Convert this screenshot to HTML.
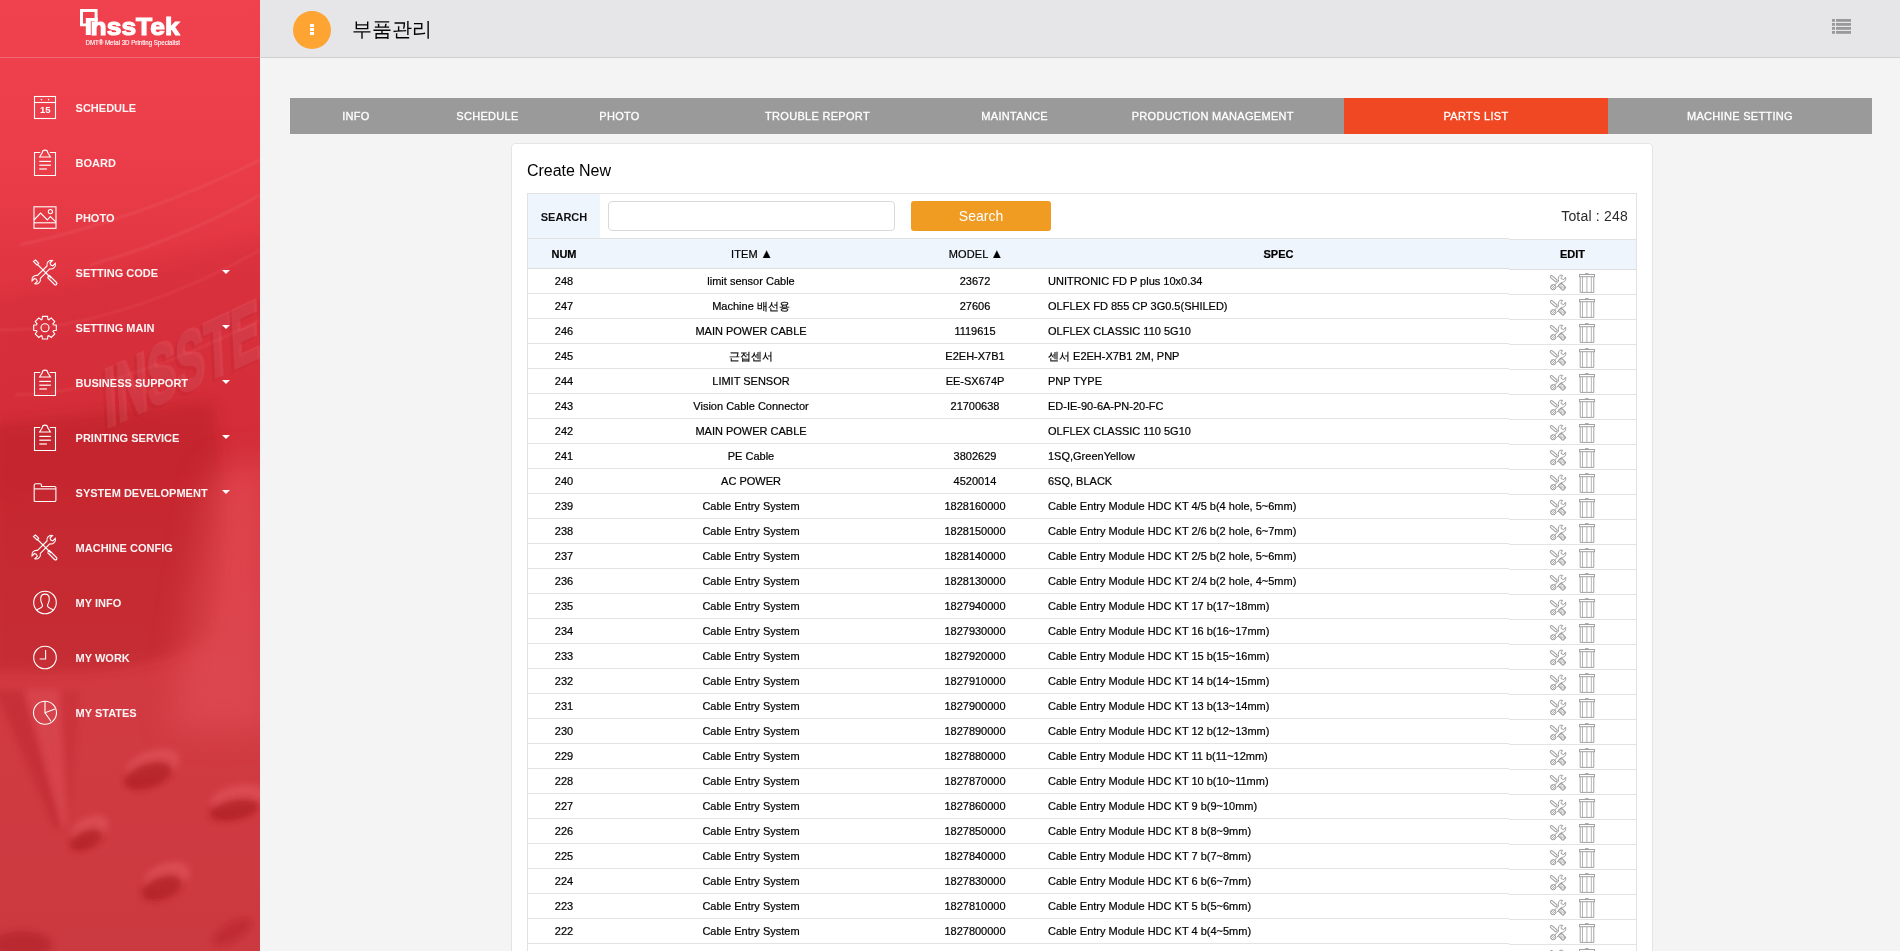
<!DOCTYPE html>
<html><head><meta charset="utf-8"><title>부품관리</title>
<style>
*{box-sizing:border-box;}
html,body{margin:0;-webkit-font-smoothing:antialiased;padding:0;width:1900px;height:951px;overflow:hidden;background:#f4f4f4;font-family:"Liberation Sans",sans-serif;}
#side{position:absolute;left:0;top:0;width:260px;height:951px;overflow:hidden;background:#e23c48;}
#side .bg{position:absolute;left:0;top:0;width:260px;height:951px;}
#logo{position:absolute;left:0;top:0;width:260px;height:58px;border-bottom:1px solid rgba(255,255,255,0.22);}
.menu{position:absolute;left:0;width:260px;height:55px;color:#fff;font-weight:bold;font-size:11px;}
.menu .ic{position:absolute;left:31px;top:13px;width:28px;height:28px;}
.menu .tx{position:absolute;left:75px;top:21px;line-height:13px;letter-spacing:0.1px;}
.menu .caret{position:absolute;left:221px;top:25px;width:0;height:0;border-left:4px solid transparent;border-right:4px solid transparent;border-top:4px solid #fff;}
#head{position:absolute;left:260px;top:0;width:1640px;height:58px;background:#e6e6e8;border-bottom:1px solid #cfcfd1;}
#circ{position:absolute;left:293px;top:11px;width:38px;height:38px;border-radius:50%;background:#fea433;}
#circ i{position:absolute;left:17px;width:4px;height:2.7px;background:#fff;}
#title{position:absolute;left:352px;top:15px;font-size:20px;color:#000;line-height:28px;}
#tabs{position:absolute;left:290px;top:98px;width:1582px;height:36px;background:#9a9a9a;}
#tabs div{position:absolute;top:0;height:36px;line-height:36px;text-align:center;color:#fff;font-size:11px;font-weight:normal;-webkit-text-stroke:0.3px #fff;letter-spacing:0.3px;}
#tabs div.on{background:#ef4822;}
#card{position:absolute;left:511px;top:143px;width:1142px;height:900px;background:#fff;border:1px solid #e4e4e4;border-radius:4px;}
#cn{position:absolute;left:527px;top:161px;font-size:16px;color:#000;letter-spacing:-0.05px;line-height:20px;}
#tbl{position:absolute;left:527px;top:193px;width:1110px;border-collapse:separate;border-spacing:0;border-left:1px solid #e2e2e2;border-right:1px solid #e2e2e2;font-size:11px;color:#000;}
#tbl td{-webkit-text-stroke:0.2px #000;padding:0;height:25px;border-bottom:1px solid #e3e3e3;text-align:center;white-space:nowrap;}
#tbl td.c4{text-align:left;padding-left:0;}
#tbl td.c5{position:relative;top:1px;}
#tbl tr.hd td{height:31px;background:#eef5fd;font-weight:bold;border-top:1px solid #e2e2e2;border-bottom-color:#dedede;}
#tbl tr.hd td.c2,#tbl tr.hd td.c3{font-weight:normal;letter-spacing:0.1px;}
.tri{font-size:12.8px;line-height:10px;margin-left:-0.6px;letter-spacing:0;}
.hs{position:relative;left:1px;}
#srow{position:absolute;left:527px;top:193px;width:1110px;height:45px;border:1px solid #e2e2e2;border-bottom:0;background:#fff;}
#srow .lab{position:absolute;left:0;top:0;width:72px;height:44px;overflow:hidden;background:#eef5fd;font-weight:bold;font-size:11px;line-height:46px;text-align:center;color:#111;}
#srow .inp{position:absolute;left:80px;top:7px;width:287px;height:30px;border:1px solid #d9d9d9;border-radius:4px;background:#fff;}
#srow .btn{position:absolute;left:383px;top:7px;width:140px;height:30px;border-radius:3px;background:#f09c22;color:#fff;font-size:14px;line-height:30px;text-align:center;}
#srow .tot{position:absolute;right:8px;top:0;line-height:44px;font-size:14px;color:#2a2a2a;letter-spacing:0.2px;}
.ed{position:absolute;left:36px;top:0;}
.tr{position:absolute;left:70px;top:0;}
#tbl td.c5 svg{display:block;}
#lst{position:absolute;left:1832px;top:19px;width:20px;height:16px;}
</style></head><body><div id="wrap" style="position:absolute;left:0;top:0;width:1900px;height:951px;will-change:transform;">
<div id="side">
<svg class="bg" width="260" height="951" viewBox="0 0 260 951">
<defs>
<linearGradient id="g1" x1="0" y1="0" x2="0" y2="1"><stop offset="0" stop-color="#f0424e"/><stop offset="0.15" stop-color="#ec3e4a"/><stop offset="0.3" stop-color="#df3540"/><stop offset="0.5" stop-color="#d6303a"/><stop offset="0.72" stop-color="#d23a42"/><stop offset="1" stop-color="#cb3a40"/></linearGradient>
<filter id="b20" x="-50%" y="-50%" width="200%" height="200%"><feGaussianBlur stdDeviation="16"/></filter>
<filter id="b8" x="-50%" y="-50%" width="200%" height="200%"><feGaussianBlur stdDeviation="7"/></filter>
<filter id="b3" x="-50%" y="-50%" width="200%" height="200%"><feGaussianBlur stdDeviation="3"/></filter>
<filter id="b1" x="-50%" y="-50%" width="200%" height="200%"><feGaussianBlur stdDeviation="1.2"/></filter>
</defs>
<rect width="260" height="951" fill="url(#g1)"/>
<path d="M-10 300 L270 235 L270 470 L-10 500 Z" fill="#c42430" opacity="0.22" filter="url(#b8)"/>
<path d="M-10 425 L212 400 C228 480 228 590 208 640 C150 672 60 676 -10 670 Z" fill="#b31a24" opacity="0.42" filter="url(#b8)"/>
<path d="M212 470 L270 455 L270 730 L170 730 Z" fill="#e6525b" opacity="0.5" filter="url(#b20)"/>
<g fill="none" stroke="#f57b82" stroke-width="2" filter="url(#b1)">
<path d="M20 245 C110 225 190 195 260 160" opacity="0.25"/>
<path d="M90 265 C160 245 215 220 260 195" opacity="0.25"/>
<path d="M0 330 C90 330 190 290 260 250" opacity="0.18"/>
<path d="M15 395 C90 395 180 360 260 320" opacity="0.18"/>
</g>
<g transform="translate(106 428) skewY(-25) skewX(3)" font-family="Liberation Sans" font-weight="bold" font-size="84"><text x="-3" y="2" fill="#a8141e" stroke="#a8141e" stroke-width="4" opacity="0.13" textLength="186" lengthAdjust="spacingAndGlyphs">INSSTEK</text><text x="0" y="0" fill="#ffffff" stroke="#fff" stroke-width="4" opacity="0.07" textLength="186" lengthAdjust="spacingAndGlyphs">INSSTEK</text></g>
<path d="M-5 690 L22 690 L62 828 L55 830 Z" fill="#b51d27" opacity="0.35" filter="url(#b3)"/>
<path d="M26 690 L58 690 L68 826 L62 828 Z" fill="#e4575f" opacity="0.35" filter="url(#b3)"/>
<path d="M62 690 L80 690 L70 826 Z" fill="#b51d27" opacity="0.2" filter="url(#b3)"/>
<g fill="#e55b62" filter="url(#b3)" opacity="0.5">
<ellipse cx="153" cy="765" rx="28" ry="15" transform="rotate(-18 153 765)"/>
<ellipse cx="238" cy="798" rx="28" ry="13" transform="rotate(-12 238 798)"/>
<ellipse cx="90" cy="829" rx="20" ry="12" transform="rotate(-25 90 829)"/>
<ellipse cx="167" cy="877" rx="24" ry="14" transform="rotate(-20 167 877)"/>
</g>
<g fill="#ad1a22" filter="url(#b3)" opacity="0.75">
<ellipse cx="148" cy="776" rx="25" ry="12" transform="rotate(-18 148 776)"/>
<ellipse cx="234" cy="810" rx="25" ry="10" transform="rotate(-12 234 810)"/>
<ellipse cx="86" cy="840" rx="17" ry="9" transform="rotate(-25 86 840)"/>
<ellipse cx="162" cy="888" rx="21" ry="11" transform="rotate(-20 162 888)"/>
<ellipse cx="232" cy="932" rx="22" ry="9" transform="rotate(-30 232 932)" opacity="0.5"/>
<ellipse cx="22" cy="945" rx="30" ry="14" opacity="0.7"/>
</g>
</svg>
<div id="logo">
<svg width="260" height="58" viewBox="0 0 260 58">
<path fill="#fff" d="M80 9h17.6v17.2h-3v-14.3h-11.6v11.6h3v2.8h-6z"/>
<path fill="#fff" d="M85.8 18h12v2.9h-7v14.1h-5z"/>
<text transform="translate(90.6 35) scale(1 1.22)" x="0" y="0" fill="#fff" stroke="#fff" stroke-width="0.9" font-family="Liberation Sans" font-weight="bold" font-size="19.6" textLength="89" lengthAdjust="spacingAndGlyphs">nssTek</text>
<text x="85.5" y="44.6" fill="#fff" font-family="Liberation Sans" stroke="#fff" stroke-width="0.12" font-size="6.6" textLength="94.5" lengthAdjust="spacingAndGlyphs">DMT® Metal 3D Printing Specialist</text>
</svg>
</div>
<svg style="position:absolute;left:0;top:0" width="260" height="951" viewBox="0 0 260 951">
<g stroke="#fff" fill="none" stroke-width="1.1"><rect x="34.5" y="96.5" width="21" height="22"/><path d="M34.5 102.5h21"/></g><g fill="#fff"><circle cx="41.4" cy="99.6" r="0.8"/><circle cx="48.6" cy="99.6" r="0.8"/></g><text x="45.2" y="113" fill="#fff" font-family="Liberation Sans" font-weight="bold" font-size="9.5" text-anchor="middle">15</text>
<text x="75.6" y="112" fill="#fff" fill-opacity="0.95" font-family="Liberation Sans" font-weight="bold" font-size="11">SCHEDULE</text>
<g stroke="#fff" fill="none" stroke-width="1.1"><path d="M40.2 152.5h-5.7v23h21v-23h-5.7"/><path d="M39.6 157L42.2 152.9A2.8 2.8 0 0 1 47.8 152.9L50.4 157Z"/></g><g fill="#fff"><rect x="39.3" y="160.8" width="11.6" height="1.2"/><rect x="39.3" y="164.6" width="11.6" height="1.2"/><rect x="39.3" y="168.4" width="7.6" height="1.2"/></g>
<text x="75.6" y="167" fill="#fff" fill-opacity="0.95" font-family="Liberation Sans" font-weight="bold" font-size="11">BOARD</text>
<g stroke="#fff" fill="none" stroke-width="1.1"><rect x="34" y="206.8" width="22" height="21.5"/><path d="M34 220l6.6-7 6.7 7 3.1-3.4 5.6 5.6"/><path d="M34 222.8h22"/><circle cx="50.4" cy="211.6" r="2.1"/></g>
<text x="75.6" y="222" fill="#fff" fill-opacity="0.95" font-family="Liberation Sans" font-weight="bold" font-size="11">PHOTO</text>
<g stroke="#fff" fill="none" stroke-width="1.1"><path d="M33.5 261.5l2-1.5 3.2 3.2-1.7 1.7z"/><path d="M37.5 264.5l13.5 13.5"/><path d="M47.5 277.5l2-2 7 7a1.4 1.4 0 0 1-2 2l-7-7"/><path d="M47 266a4.5 4.5 0 0 1 5.5-5.5l-2.5 2.5 0.8 2 2 0.8 2.5-2.5a4.5 4.5 0 0 1-5.5 5.5l-9.5 9.5a4.5 4.5 0 0 1-5.5 5.5l2.5-2.5-0.8-2-2-0.8-2.5 2.5a4.5 4.5 0 0 1 5.5-5.5z"/></g>
<text x="75.6" y="277" fill="#fff" fill-opacity="0.95" font-family="Liberation Sans" font-weight="bold" font-size="11">SETTING CODE</text>
<path d="M222 270h8l-4 4z" fill="#fff"/>
<g stroke="#fff" fill="none" stroke-width="1.1"><path d="M42.07 319.40 L42.47 316.38 L47.53 316.38 L47.93 319.40 L48.79 319.76 L51.21 317.91 L54.79 321.49 L52.94 323.91 L53.30 324.77 L56.32 325.17 L56.32 330.23 L53.30 330.63 L52.94 331.49 L54.79 333.91 L51.21 337.49 L48.79 335.64 L47.93 336.00 L47.53 339.02 L42.47 339.02 L42.07 336.00 L41.21 335.64 L38.79 337.49 L35.21 333.91 L37.06 331.49 L36.70 330.63 L33.68 330.23 L33.68 325.17 L36.70 324.77 L37.06 323.91 L35.21 321.49 L38.79 317.91 L41.21 319.76Z"/><circle cx="45" cy="327.7" r="4"/></g>
<text x="75.6" y="332" fill="#fff" fill-opacity="0.95" font-family="Liberation Sans" font-weight="bold" font-size="11">SETTING MAIN</text>
<path d="M222 325h8l-4 4z" fill="#fff"/>
<g stroke="#fff" fill="none" stroke-width="1.1"><path d="M40.2 372.5h-5.7v23h21v-23h-5.7"/><path d="M39.6 377L42.2 372.9A2.8 2.8 0 0 1 47.8 372.9L50.4 377Z"/></g><g fill="#fff"><rect x="39.3" y="380.8" width="11.6" height="1.2"/><rect x="39.3" y="384.6" width="11.6" height="1.2"/><rect x="39.3" y="388.4" width="7.6" height="1.2"/></g>
<text x="75.6" y="387" fill="#fff" fill-opacity="0.95" font-family="Liberation Sans" font-weight="bold" font-size="11">BUSINESS SUPPORT</text>
<path d="M222 380h8l-4 4z" fill="#fff"/>
<g stroke="#fff" fill="none" stroke-width="1.1"><path d="M40.2 427.5h-5.7v23h21v-23h-5.7"/><path d="M39.6 432L42.2 427.9A2.8 2.8 0 0 1 47.8 427.9L50.4 432Z"/></g><g fill="#fff"><rect x="39.3" y="435.8" width="11.6" height="1.2"/><rect x="39.3" y="439.6" width="11.6" height="1.2"/><rect x="39.3" y="443.4" width="7.6" height="1.2"/></g>
<text x="75.6" y="442" fill="#fff" fill-opacity="0.95" font-family="Liberation Sans" font-weight="bold" font-size="11">PRINTING SERVICE</text>
<path d="M222 435h8l-4 4z" fill="#fff"/>
<g stroke="#fff" fill="none" stroke-width="1.1"><path d="M34.2 501.5v-16.2a1.6 1.6 0 0 1 1.6-1.6h4.3a1.3 1.3 0 0 1 1.3 1.3v1.5h13.2a1.3 1.3 0 0 1 1.3 1.3v12.4a1.3 1.3 0 0 1-1.3 1.3h-19.1a1.3 1.3 0 0 1-1.3-1.3z"/><path d="M34.2 488.9h21.7"/></g>
<text x="75.6" y="497" fill="#fff" fill-opacity="0.95" font-family="Liberation Sans" font-weight="bold" font-size="11">SYSTEM DEVELOPMENT</text>
<path d="M222 490h8l-4 4z" fill="#fff"/>
<g stroke="#fff" fill="none" stroke-width="1.1"><path d="M33.5 536.5l2-1.5 3.2 3.2-1.7 1.7z"/><path d="M37.5 539.5l13.5 13.5"/><path d="M47.5 552.5l2-2 7 7a1.4 1.4 0 0 1-2 2l-7-7"/><path d="M47 541a4.5 4.5 0 0 1 5.5-5.5l-2.5 2.5 0.8 2 2 0.8 2.5-2.5a4.5 4.5 0 0 1-5.5 5.5l-9.5 9.5a4.5 4.5 0 0 1-5.5 5.5l2.5-2.5-0.8-2-2-0.8-2.5 2.5a4.5 4.5 0 0 1 5.5-5.5z"/></g>
<text x="75.6" y="552" fill="#fff" fill-opacity="0.95" font-family="Liberation Sans" font-weight="bold" font-size="11">MACHINE CONFIG</text>
<g stroke="#fff" fill="none" stroke-width="1.1"><circle cx="45" cy="602.5" r="11.3"/><path d="M36.5 610c3-1.8 5-1.8 5.8-3.4 0.5-1.2 0-2.4-0.7-3.6-0.6-1-0.9-2.3-0.9-4 0-3 1.8-4.9 4.3-4.9s4.3 1.9 4.3 4.9c0 1.7-0.3 3-0.9 4-0.7 1.2-1.2 2.4-0.7 3.6 0.8 1.6 2.8 1.6 5.8 3.4"/></g>
<text x="75.6" y="607" fill="#fff" fill-opacity="0.95" font-family="Liberation Sans" font-weight="bold" font-size="11">MY INFO</text>
<g stroke="#fff" fill="none" stroke-width="1.1"><circle cx="45" cy="657.5" r="11.3"/><path d="M45.6 650v9h-6"/></g>
<text x="75.6" y="662" fill="#fff" fill-opacity="0.95" font-family="Liberation Sans" font-weight="bold" font-size="11">MY WORK</text>
<g stroke="#fff" fill="none" stroke-width="1.1"><circle cx="45" cy="712.7" r="11.5"/><path d="M45 701.2v11.5l9.9-3.6M45 712.7l5.9 8.6"/></g>
<text x="75.6" y="717" fill="#fff" fill-opacity="0.95" font-family="Liberation Sans" font-weight="bold" font-size="11">MY STATES</text>
</svg>
</div>
<div id="head"></div>
<div id="circ"><i style="top:13.2px"></i><i style="top:17.2px"></i><i style="top:21.2px"></i></div>
<div id="title">부품관리</div>
<svg id="lst" width="20" height="16" viewBox="0 0 20 16"><g fill="#999"><rect x="0" y="0" width="3" height="2.8"/><rect x="4" y="0" width="15" height="2.8"/><rect x="0" y="4" width="3" height="2.8"/><rect x="4" y="4" width="15" height="2.8"/><rect x="0" y="8" width="3" height="2.8"/><rect x="4" y="8" width="15" height="2.8"/><rect x="0" y="12" width="3" height="2.8"/><rect x="4" y="12" width="15" height="2.8"/></g></svg>
<div id="tabs">
<div style="left:0;width:132px">INFO</div>
<div style="left:131.5px;width:132px">SCHEDULE</div>
<div style="left:263.5px;width:132px">PHOTO</div>
<div style="left:395.5px;width:264px">TROUBLE REPORT</div>
<div style="left:658.7px;width:132px">MAINTANCE</div>
<div style="left:791.8px;width:262px">PRODUCTION MANAGEMENT</div>
<div class="on" style="left:1054px;width:264px">PARTS LIST</div>
<div style="left:1318px;width:264px">MACHINE SETTING</div>
</div>
<svg width="0" height="0" style="position:absolute"><defs><pattern id="ht" width="2" height="2" patternUnits="userSpaceOnUse"><rect width="2" height="2" fill="#fff"/><rect width="1" height="1" fill="#b4b4b4"/><rect x="1" y="1" width="1" height="1" fill="#b4b4b4"/></pattern></defs></svg>
<div id="card"></div>
<div id="cn">Create New</div>
<table id="tbl" style="top:238px">
<colgroup><col style="width:72px"><col style="width:302px"><col style="width:146px"><col style="width:461px"><col style="width:127px"></colgroup>
<tr class="hd"><td class="c1">NUM</td><td class="c2"><span class="hs">ITEM <span class="tri">▲</span></span></td><td class="c3"><span class="hs">MODEL <span class="tri">▲</span></span></td><td class="c4" style="text-align:center;padding-left:0">SPEC</td><td class="c5"><span style="position:relative;top:-1px">EDIT</span></td></tr>
<tr><td class="c1">248</td><td class="c2">limit sensor Cable</td><td class="c3">23672</td><td class="c4">UNITRONIC FD P plus 10x0.34</td><td class="c5"><span class="ed"><svg class="ic2" width="60" height="25" viewBox="0 0 60 25"><g fill="none" stroke="#9a9a9a" stroke-width="0.95"><rect x="4.6" y="7.4" width="8.2" height="2.4" rx="1.2" transform="rotate(41 8.7 8.6)"/><rect x="13.6" y="14.5" width="6.8" height="4.2" rx="0.9" transform="rotate(45 17 16.6)" fill="url(#ht)"/><path d="M9.4 15.4L13.6 11C13 9.5 13.2 6.6 15.05 5.2L17.65 5.35L16.2 7.5L16.2 8.7L18.8 9.55L20.55 7.2C21 8.5 20.7 10.1 20 11C19.2 12 17.8 12.4 16.8 12.4L11.6 17.5"/><circle cx="8.2" cy="17.2" r="2.6" fill="url(#ht)"/></g></svg></span><span class="tr"><svg class="ic3" width="20" height="25" viewBox="0 0 20 25"><g fill="none" stroke="#a2a2a2" stroke-width="1"><rect x="6" y="3" width="3.6" height="1.1" fill="#b0b0b0" stroke="none"/><rect x="0.5" y="4.5" width="15" height="2.2"/><path d="M1.2 6.8v15.6h13.6v-15.6"/><path d="M3.5 7v15M7.9 7v15M12.3 7v15" stroke="#b4b4b4"/></g></svg></span></td></tr>
<tr><td class="c1">247</td><td class="c2">Machine 배선용</td><td class="c3">27606</td><td class="c4">OLFLEX FD 855 CP 3G0.5(SHILED)</td><td class="c5"><span class="ed"><svg class="ic2" width="60" height="25" viewBox="0 0 60 25"><g fill="none" stroke="#9a9a9a" stroke-width="0.95"><rect x="4.6" y="7.4" width="8.2" height="2.4" rx="1.2" transform="rotate(41 8.7 8.6)"/><rect x="13.6" y="14.5" width="6.8" height="4.2" rx="0.9" transform="rotate(45 17 16.6)" fill="url(#ht)"/><path d="M9.4 15.4L13.6 11C13 9.5 13.2 6.6 15.05 5.2L17.65 5.35L16.2 7.5L16.2 8.7L18.8 9.55L20.55 7.2C21 8.5 20.7 10.1 20 11C19.2 12 17.8 12.4 16.8 12.4L11.6 17.5"/><circle cx="8.2" cy="17.2" r="2.6" fill="url(#ht)"/></g></svg></span><span class="tr"><svg class="ic3" width="20" height="25" viewBox="0 0 20 25"><g fill="none" stroke="#a2a2a2" stroke-width="1"><rect x="6" y="3" width="3.6" height="1.1" fill="#b0b0b0" stroke="none"/><rect x="0.5" y="4.5" width="15" height="2.2"/><path d="M1.2 6.8v15.6h13.6v-15.6"/><path d="M3.5 7v15M7.9 7v15M12.3 7v15" stroke="#b4b4b4"/></g></svg></span></td></tr>
<tr><td class="c1">246</td><td class="c2">MAIN POWER CABLE</td><td class="c3">1119615</td><td class="c4">OLFLEX CLASSIC 110 5G10</td><td class="c5"><span class="ed"><svg class="ic2" width="60" height="25" viewBox="0 0 60 25"><g fill="none" stroke="#9a9a9a" stroke-width="0.95"><rect x="4.6" y="7.4" width="8.2" height="2.4" rx="1.2" transform="rotate(41 8.7 8.6)"/><rect x="13.6" y="14.5" width="6.8" height="4.2" rx="0.9" transform="rotate(45 17 16.6)" fill="url(#ht)"/><path d="M9.4 15.4L13.6 11C13 9.5 13.2 6.6 15.05 5.2L17.65 5.35L16.2 7.5L16.2 8.7L18.8 9.55L20.55 7.2C21 8.5 20.7 10.1 20 11C19.2 12 17.8 12.4 16.8 12.4L11.6 17.5"/><circle cx="8.2" cy="17.2" r="2.6" fill="url(#ht)"/></g></svg></span><span class="tr"><svg class="ic3" width="20" height="25" viewBox="0 0 20 25"><g fill="none" stroke="#a2a2a2" stroke-width="1"><rect x="6" y="3" width="3.6" height="1.1" fill="#b0b0b0" stroke="none"/><rect x="0.5" y="4.5" width="15" height="2.2"/><path d="M1.2 6.8v15.6h13.6v-15.6"/><path d="M3.5 7v15M7.9 7v15M12.3 7v15" stroke="#b4b4b4"/></g></svg></span></td></tr>
<tr><td class="c1">245</td><td class="c2">근접센서</td><td class="c3">E2EH-X7B1</td><td class="c4">센서 E2EH-X7B1 2M, PNP</td><td class="c5"><span class="ed"><svg class="ic2" width="60" height="25" viewBox="0 0 60 25"><g fill="none" stroke="#9a9a9a" stroke-width="0.95"><rect x="4.6" y="7.4" width="8.2" height="2.4" rx="1.2" transform="rotate(41 8.7 8.6)"/><rect x="13.6" y="14.5" width="6.8" height="4.2" rx="0.9" transform="rotate(45 17 16.6)" fill="url(#ht)"/><path d="M9.4 15.4L13.6 11C13 9.5 13.2 6.6 15.05 5.2L17.65 5.35L16.2 7.5L16.2 8.7L18.8 9.55L20.55 7.2C21 8.5 20.7 10.1 20 11C19.2 12 17.8 12.4 16.8 12.4L11.6 17.5"/><circle cx="8.2" cy="17.2" r="2.6" fill="url(#ht)"/></g></svg></span><span class="tr"><svg class="ic3" width="20" height="25" viewBox="0 0 20 25"><g fill="none" stroke="#a2a2a2" stroke-width="1"><rect x="6" y="3" width="3.6" height="1.1" fill="#b0b0b0" stroke="none"/><rect x="0.5" y="4.5" width="15" height="2.2"/><path d="M1.2 6.8v15.6h13.6v-15.6"/><path d="M3.5 7v15M7.9 7v15M12.3 7v15" stroke="#b4b4b4"/></g></svg></span></td></tr>
<tr><td class="c1">244</td><td class="c2">LIMIT SENSOR</td><td class="c3">EE-SX674P</td><td class="c4">PNP TYPE</td><td class="c5"><span class="ed"><svg class="ic2" width="60" height="25" viewBox="0 0 60 25"><g fill="none" stroke="#9a9a9a" stroke-width="0.95"><rect x="4.6" y="7.4" width="8.2" height="2.4" rx="1.2" transform="rotate(41 8.7 8.6)"/><rect x="13.6" y="14.5" width="6.8" height="4.2" rx="0.9" transform="rotate(45 17 16.6)" fill="url(#ht)"/><path d="M9.4 15.4L13.6 11C13 9.5 13.2 6.6 15.05 5.2L17.65 5.35L16.2 7.5L16.2 8.7L18.8 9.55L20.55 7.2C21 8.5 20.7 10.1 20 11C19.2 12 17.8 12.4 16.8 12.4L11.6 17.5"/><circle cx="8.2" cy="17.2" r="2.6" fill="url(#ht)"/></g></svg></span><span class="tr"><svg class="ic3" width="20" height="25" viewBox="0 0 20 25"><g fill="none" stroke="#a2a2a2" stroke-width="1"><rect x="6" y="3" width="3.6" height="1.1" fill="#b0b0b0" stroke="none"/><rect x="0.5" y="4.5" width="15" height="2.2"/><path d="M1.2 6.8v15.6h13.6v-15.6"/><path d="M3.5 7v15M7.9 7v15M12.3 7v15" stroke="#b4b4b4"/></g></svg></span></td></tr>
<tr><td class="c1">243</td><td class="c2">Vision Cable Connector</td><td class="c3">21700638</td><td class="c4">ED-IE-90-6A-PN-20-FC</td><td class="c5"><span class="ed"><svg class="ic2" width="60" height="25" viewBox="0 0 60 25"><g fill="none" stroke="#9a9a9a" stroke-width="0.95"><rect x="4.6" y="7.4" width="8.2" height="2.4" rx="1.2" transform="rotate(41 8.7 8.6)"/><rect x="13.6" y="14.5" width="6.8" height="4.2" rx="0.9" transform="rotate(45 17 16.6)" fill="url(#ht)"/><path d="M9.4 15.4L13.6 11C13 9.5 13.2 6.6 15.05 5.2L17.65 5.35L16.2 7.5L16.2 8.7L18.8 9.55L20.55 7.2C21 8.5 20.7 10.1 20 11C19.2 12 17.8 12.4 16.8 12.4L11.6 17.5"/><circle cx="8.2" cy="17.2" r="2.6" fill="url(#ht)"/></g></svg></span><span class="tr"><svg class="ic3" width="20" height="25" viewBox="0 0 20 25"><g fill="none" stroke="#a2a2a2" stroke-width="1"><rect x="6" y="3" width="3.6" height="1.1" fill="#b0b0b0" stroke="none"/><rect x="0.5" y="4.5" width="15" height="2.2"/><path d="M1.2 6.8v15.6h13.6v-15.6"/><path d="M3.5 7v15M7.9 7v15M12.3 7v15" stroke="#b4b4b4"/></g></svg></span></td></tr>
<tr><td class="c1">242</td><td class="c2">MAIN POWER CABLE</td><td class="c3"></td><td class="c4">OLFLEX CLASSIC 110 5G10</td><td class="c5"><span class="ed"><svg class="ic2" width="60" height="25" viewBox="0 0 60 25"><g fill="none" stroke="#9a9a9a" stroke-width="0.95"><rect x="4.6" y="7.4" width="8.2" height="2.4" rx="1.2" transform="rotate(41 8.7 8.6)"/><rect x="13.6" y="14.5" width="6.8" height="4.2" rx="0.9" transform="rotate(45 17 16.6)" fill="url(#ht)"/><path d="M9.4 15.4L13.6 11C13 9.5 13.2 6.6 15.05 5.2L17.65 5.35L16.2 7.5L16.2 8.7L18.8 9.55L20.55 7.2C21 8.5 20.7 10.1 20 11C19.2 12 17.8 12.4 16.8 12.4L11.6 17.5"/><circle cx="8.2" cy="17.2" r="2.6" fill="url(#ht)"/></g></svg></span><span class="tr"><svg class="ic3" width="20" height="25" viewBox="0 0 20 25"><g fill="none" stroke="#a2a2a2" stroke-width="1"><rect x="6" y="3" width="3.6" height="1.1" fill="#b0b0b0" stroke="none"/><rect x="0.5" y="4.5" width="15" height="2.2"/><path d="M1.2 6.8v15.6h13.6v-15.6"/><path d="M3.5 7v15M7.9 7v15M12.3 7v15" stroke="#b4b4b4"/></g></svg></span></td></tr>
<tr><td class="c1">241</td><td class="c2">PE Cable</td><td class="c3">3802629</td><td class="c4">1SQ,GreenYellow</td><td class="c5"><span class="ed"><svg class="ic2" width="60" height="25" viewBox="0 0 60 25"><g fill="none" stroke="#9a9a9a" stroke-width="0.95"><rect x="4.6" y="7.4" width="8.2" height="2.4" rx="1.2" transform="rotate(41 8.7 8.6)"/><rect x="13.6" y="14.5" width="6.8" height="4.2" rx="0.9" transform="rotate(45 17 16.6)" fill="url(#ht)"/><path d="M9.4 15.4L13.6 11C13 9.5 13.2 6.6 15.05 5.2L17.65 5.35L16.2 7.5L16.2 8.7L18.8 9.55L20.55 7.2C21 8.5 20.7 10.1 20 11C19.2 12 17.8 12.4 16.8 12.4L11.6 17.5"/><circle cx="8.2" cy="17.2" r="2.6" fill="url(#ht)"/></g></svg></span><span class="tr"><svg class="ic3" width="20" height="25" viewBox="0 0 20 25"><g fill="none" stroke="#a2a2a2" stroke-width="1"><rect x="6" y="3" width="3.6" height="1.1" fill="#b0b0b0" stroke="none"/><rect x="0.5" y="4.5" width="15" height="2.2"/><path d="M1.2 6.8v15.6h13.6v-15.6"/><path d="M3.5 7v15M7.9 7v15M12.3 7v15" stroke="#b4b4b4"/></g></svg></span></td></tr>
<tr><td class="c1">240</td><td class="c2">AC POWER</td><td class="c3">4520014</td><td class="c4">6SQ, BLACK</td><td class="c5"><span class="ed"><svg class="ic2" width="60" height="25" viewBox="0 0 60 25"><g fill="none" stroke="#9a9a9a" stroke-width="0.95"><rect x="4.6" y="7.4" width="8.2" height="2.4" rx="1.2" transform="rotate(41 8.7 8.6)"/><rect x="13.6" y="14.5" width="6.8" height="4.2" rx="0.9" transform="rotate(45 17 16.6)" fill="url(#ht)"/><path d="M9.4 15.4L13.6 11C13 9.5 13.2 6.6 15.05 5.2L17.65 5.35L16.2 7.5L16.2 8.7L18.8 9.55L20.55 7.2C21 8.5 20.7 10.1 20 11C19.2 12 17.8 12.4 16.8 12.4L11.6 17.5"/><circle cx="8.2" cy="17.2" r="2.6" fill="url(#ht)"/></g></svg></span><span class="tr"><svg class="ic3" width="20" height="25" viewBox="0 0 20 25"><g fill="none" stroke="#a2a2a2" stroke-width="1"><rect x="6" y="3" width="3.6" height="1.1" fill="#b0b0b0" stroke="none"/><rect x="0.5" y="4.5" width="15" height="2.2"/><path d="M1.2 6.8v15.6h13.6v-15.6"/><path d="M3.5 7v15M7.9 7v15M12.3 7v15" stroke="#b4b4b4"/></g></svg></span></td></tr>
<tr><td class="c1">239</td><td class="c2">Cable Entry System</td><td class="c3">1828160000</td><td class="c4">Cable Entry Module HDC KT 4/5 b(4 hole, 5~6mm)</td><td class="c5"><span class="ed"><svg class="ic2" width="60" height="25" viewBox="0 0 60 25"><g fill="none" stroke="#9a9a9a" stroke-width="0.95"><rect x="4.6" y="7.4" width="8.2" height="2.4" rx="1.2" transform="rotate(41 8.7 8.6)"/><rect x="13.6" y="14.5" width="6.8" height="4.2" rx="0.9" transform="rotate(45 17 16.6)" fill="url(#ht)"/><path d="M9.4 15.4L13.6 11C13 9.5 13.2 6.6 15.05 5.2L17.65 5.35L16.2 7.5L16.2 8.7L18.8 9.55L20.55 7.2C21 8.5 20.7 10.1 20 11C19.2 12 17.8 12.4 16.8 12.4L11.6 17.5"/><circle cx="8.2" cy="17.2" r="2.6" fill="url(#ht)"/></g></svg></span><span class="tr"><svg class="ic3" width="20" height="25" viewBox="0 0 20 25"><g fill="none" stroke="#a2a2a2" stroke-width="1"><rect x="6" y="3" width="3.6" height="1.1" fill="#b0b0b0" stroke="none"/><rect x="0.5" y="4.5" width="15" height="2.2"/><path d="M1.2 6.8v15.6h13.6v-15.6"/><path d="M3.5 7v15M7.9 7v15M12.3 7v15" stroke="#b4b4b4"/></g></svg></span></td></tr>
<tr><td class="c1">238</td><td class="c2">Cable Entry System</td><td class="c3">1828150000</td><td class="c4">Cable Entry Module HDC KT 2/6 b(2 hole, 6~7mm)</td><td class="c5"><span class="ed"><svg class="ic2" width="60" height="25" viewBox="0 0 60 25"><g fill="none" stroke="#9a9a9a" stroke-width="0.95"><rect x="4.6" y="7.4" width="8.2" height="2.4" rx="1.2" transform="rotate(41 8.7 8.6)"/><rect x="13.6" y="14.5" width="6.8" height="4.2" rx="0.9" transform="rotate(45 17 16.6)" fill="url(#ht)"/><path d="M9.4 15.4L13.6 11C13 9.5 13.2 6.6 15.05 5.2L17.65 5.35L16.2 7.5L16.2 8.7L18.8 9.55L20.55 7.2C21 8.5 20.7 10.1 20 11C19.2 12 17.8 12.4 16.8 12.4L11.6 17.5"/><circle cx="8.2" cy="17.2" r="2.6" fill="url(#ht)"/></g></svg></span><span class="tr"><svg class="ic3" width="20" height="25" viewBox="0 0 20 25"><g fill="none" stroke="#a2a2a2" stroke-width="1"><rect x="6" y="3" width="3.6" height="1.1" fill="#b0b0b0" stroke="none"/><rect x="0.5" y="4.5" width="15" height="2.2"/><path d="M1.2 6.8v15.6h13.6v-15.6"/><path d="M3.5 7v15M7.9 7v15M12.3 7v15" stroke="#b4b4b4"/></g></svg></span></td></tr>
<tr><td class="c1">237</td><td class="c2">Cable Entry System</td><td class="c3">1828140000</td><td class="c4">Cable Entry Module HDC KT 2/5 b(2 hole, 5~6mm)</td><td class="c5"><span class="ed"><svg class="ic2" width="60" height="25" viewBox="0 0 60 25"><g fill="none" stroke="#9a9a9a" stroke-width="0.95"><rect x="4.6" y="7.4" width="8.2" height="2.4" rx="1.2" transform="rotate(41 8.7 8.6)"/><rect x="13.6" y="14.5" width="6.8" height="4.2" rx="0.9" transform="rotate(45 17 16.6)" fill="url(#ht)"/><path d="M9.4 15.4L13.6 11C13 9.5 13.2 6.6 15.05 5.2L17.65 5.35L16.2 7.5L16.2 8.7L18.8 9.55L20.55 7.2C21 8.5 20.7 10.1 20 11C19.2 12 17.8 12.4 16.8 12.4L11.6 17.5"/><circle cx="8.2" cy="17.2" r="2.6" fill="url(#ht)"/></g></svg></span><span class="tr"><svg class="ic3" width="20" height="25" viewBox="0 0 20 25"><g fill="none" stroke="#a2a2a2" stroke-width="1"><rect x="6" y="3" width="3.6" height="1.1" fill="#b0b0b0" stroke="none"/><rect x="0.5" y="4.5" width="15" height="2.2"/><path d="M1.2 6.8v15.6h13.6v-15.6"/><path d="M3.5 7v15M7.9 7v15M12.3 7v15" stroke="#b4b4b4"/></g></svg></span></td></tr>
<tr><td class="c1">236</td><td class="c2">Cable Entry System</td><td class="c3">1828130000</td><td class="c4">Cable Entry Module HDC KT 2/4 b(2 hole, 4~5mm)</td><td class="c5"><span class="ed"><svg class="ic2" width="60" height="25" viewBox="0 0 60 25"><g fill="none" stroke="#9a9a9a" stroke-width="0.95"><rect x="4.6" y="7.4" width="8.2" height="2.4" rx="1.2" transform="rotate(41 8.7 8.6)"/><rect x="13.6" y="14.5" width="6.8" height="4.2" rx="0.9" transform="rotate(45 17 16.6)" fill="url(#ht)"/><path d="M9.4 15.4L13.6 11C13 9.5 13.2 6.6 15.05 5.2L17.65 5.35L16.2 7.5L16.2 8.7L18.8 9.55L20.55 7.2C21 8.5 20.7 10.1 20 11C19.2 12 17.8 12.4 16.8 12.4L11.6 17.5"/><circle cx="8.2" cy="17.2" r="2.6" fill="url(#ht)"/></g></svg></span><span class="tr"><svg class="ic3" width="20" height="25" viewBox="0 0 20 25"><g fill="none" stroke="#a2a2a2" stroke-width="1"><rect x="6" y="3" width="3.6" height="1.1" fill="#b0b0b0" stroke="none"/><rect x="0.5" y="4.5" width="15" height="2.2"/><path d="M1.2 6.8v15.6h13.6v-15.6"/><path d="M3.5 7v15M7.9 7v15M12.3 7v15" stroke="#b4b4b4"/></g></svg></span></td></tr>
<tr><td class="c1">235</td><td class="c2">Cable Entry System</td><td class="c3">1827940000</td><td class="c4">Cable Entry Module HDC KT 17 b(17~18mm)</td><td class="c5"><span class="ed"><svg class="ic2" width="60" height="25" viewBox="0 0 60 25"><g fill="none" stroke="#9a9a9a" stroke-width="0.95"><rect x="4.6" y="7.4" width="8.2" height="2.4" rx="1.2" transform="rotate(41 8.7 8.6)"/><rect x="13.6" y="14.5" width="6.8" height="4.2" rx="0.9" transform="rotate(45 17 16.6)" fill="url(#ht)"/><path d="M9.4 15.4L13.6 11C13 9.5 13.2 6.6 15.05 5.2L17.65 5.35L16.2 7.5L16.2 8.7L18.8 9.55L20.55 7.2C21 8.5 20.7 10.1 20 11C19.2 12 17.8 12.4 16.8 12.4L11.6 17.5"/><circle cx="8.2" cy="17.2" r="2.6" fill="url(#ht)"/></g></svg></span><span class="tr"><svg class="ic3" width="20" height="25" viewBox="0 0 20 25"><g fill="none" stroke="#a2a2a2" stroke-width="1"><rect x="6" y="3" width="3.6" height="1.1" fill="#b0b0b0" stroke="none"/><rect x="0.5" y="4.5" width="15" height="2.2"/><path d="M1.2 6.8v15.6h13.6v-15.6"/><path d="M3.5 7v15M7.9 7v15M12.3 7v15" stroke="#b4b4b4"/></g></svg></span></td></tr>
<tr><td class="c1">234</td><td class="c2">Cable Entry System</td><td class="c3">1827930000</td><td class="c4">Cable Entry Module HDC KT 16 b(16~17mm)</td><td class="c5"><span class="ed"><svg class="ic2" width="60" height="25" viewBox="0 0 60 25"><g fill="none" stroke="#9a9a9a" stroke-width="0.95"><rect x="4.6" y="7.4" width="8.2" height="2.4" rx="1.2" transform="rotate(41 8.7 8.6)"/><rect x="13.6" y="14.5" width="6.8" height="4.2" rx="0.9" transform="rotate(45 17 16.6)" fill="url(#ht)"/><path d="M9.4 15.4L13.6 11C13 9.5 13.2 6.6 15.05 5.2L17.65 5.35L16.2 7.5L16.2 8.7L18.8 9.55L20.55 7.2C21 8.5 20.7 10.1 20 11C19.2 12 17.8 12.4 16.8 12.4L11.6 17.5"/><circle cx="8.2" cy="17.2" r="2.6" fill="url(#ht)"/></g></svg></span><span class="tr"><svg class="ic3" width="20" height="25" viewBox="0 0 20 25"><g fill="none" stroke="#a2a2a2" stroke-width="1"><rect x="6" y="3" width="3.6" height="1.1" fill="#b0b0b0" stroke="none"/><rect x="0.5" y="4.5" width="15" height="2.2"/><path d="M1.2 6.8v15.6h13.6v-15.6"/><path d="M3.5 7v15M7.9 7v15M12.3 7v15" stroke="#b4b4b4"/></g></svg></span></td></tr>
<tr><td class="c1">233</td><td class="c2">Cable Entry System</td><td class="c3">1827920000</td><td class="c4">Cable Entry Module HDC KT 15 b(15~16mm)</td><td class="c5"><span class="ed"><svg class="ic2" width="60" height="25" viewBox="0 0 60 25"><g fill="none" stroke="#9a9a9a" stroke-width="0.95"><rect x="4.6" y="7.4" width="8.2" height="2.4" rx="1.2" transform="rotate(41 8.7 8.6)"/><rect x="13.6" y="14.5" width="6.8" height="4.2" rx="0.9" transform="rotate(45 17 16.6)" fill="url(#ht)"/><path d="M9.4 15.4L13.6 11C13 9.5 13.2 6.6 15.05 5.2L17.65 5.35L16.2 7.5L16.2 8.7L18.8 9.55L20.55 7.2C21 8.5 20.7 10.1 20 11C19.2 12 17.8 12.4 16.8 12.4L11.6 17.5"/><circle cx="8.2" cy="17.2" r="2.6" fill="url(#ht)"/></g></svg></span><span class="tr"><svg class="ic3" width="20" height="25" viewBox="0 0 20 25"><g fill="none" stroke="#a2a2a2" stroke-width="1"><rect x="6" y="3" width="3.6" height="1.1" fill="#b0b0b0" stroke="none"/><rect x="0.5" y="4.5" width="15" height="2.2"/><path d="M1.2 6.8v15.6h13.6v-15.6"/><path d="M3.5 7v15M7.9 7v15M12.3 7v15" stroke="#b4b4b4"/></g></svg></span></td></tr>
<tr><td class="c1">232</td><td class="c2">Cable Entry System</td><td class="c3">1827910000</td><td class="c4">Cable Entry Module HDC KT 14 b(14~15mm)</td><td class="c5"><span class="ed"><svg class="ic2" width="60" height="25" viewBox="0 0 60 25"><g fill="none" stroke="#9a9a9a" stroke-width="0.95"><rect x="4.6" y="7.4" width="8.2" height="2.4" rx="1.2" transform="rotate(41 8.7 8.6)"/><rect x="13.6" y="14.5" width="6.8" height="4.2" rx="0.9" transform="rotate(45 17 16.6)" fill="url(#ht)"/><path d="M9.4 15.4L13.6 11C13 9.5 13.2 6.6 15.05 5.2L17.65 5.35L16.2 7.5L16.2 8.7L18.8 9.55L20.55 7.2C21 8.5 20.7 10.1 20 11C19.2 12 17.8 12.4 16.8 12.4L11.6 17.5"/><circle cx="8.2" cy="17.2" r="2.6" fill="url(#ht)"/></g></svg></span><span class="tr"><svg class="ic3" width="20" height="25" viewBox="0 0 20 25"><g fill="none" stroke="#a2a2a2" stroke-width="1"><rect x="6" y="3" width="3.6" height="1.1" fill="#b0b0b0" stroke="none"/><rect x="0.5" y="4.5" width="15" height="2.2"/><path d="M1.2 6.8v15.6h13.6v-15.6"/><path d="M3.5 7v15M7.9 7v15M12.3 7v15" stroke="#b4b4b4"/></g></svg></span></td></tr>
<tr><td class="c1">231</td><td class="c2">Cable Entry System</td><td class="c3">1827900000</td><td class="c4">Cable Entry Module HDC KT 13 b(13~14mm)</td><td class="c5"><span class="ed"><svg class="ic2" width="60" height="25" viewBox="0 0 60 25"><g fill="none" stroke="#9a9a9a" stroke-width="0.95"><rect x="4.6" y="7.4" width="8.2" height="2.4" rx="1.2" transform="rotate(41 8.7 8.6)"/><rect x="13.6" y="14.5" width="6.8" height="4.2" rx="0.9" transform="rotate(45 17 16.6)" fill="url(#ht)"/><path d="M9.4 15.4L13.6 11C13 9.5 13.2 6.6 15.05 5.2L17.65 5.35L16.2 7.5L16.2 8.7L18.8 9.55L20.55 7.2C21 8.5 20.7 10.1 20 11C19.2 12 17.8 12.4 16.8 12.4L11.6 17.5"/><circle cx="8.2" cy="17.2" r="2.6" fill="url(#ht)"/></g></svg></span><span class="tr"><svg class="ic3" width="20" height="25" viewBox="0 0 20 25"><g fill="none" stroke="#a2a2a2" stroke-width="1"><rect x="6" y="3" width="3.6" height="1.1" fill="#b0b0b0" stroke="none"/><rect x="0.5" y="4.5" width="15" height="2.2"/><path d="M1.2 6.8v15.6h13.6v-15.6"/><path d="M3.5 7v15M7.9 7v15M12.3 7v15" stroke="#b4b4b4"/></g></svg></span></td></tr>
<tr><td class="c1">230</td><td class="c2">Cable Entry System</td><td class="c3">1827890000</td><td class="c4">Cable Entry Module HDC KT 12 b(12~13mm)</td><td class="c5"><span class="ed"><svg class="ic2" width="60" height="25" viewBox="0 0 60 25"><g fill="none" stroke="#9a9a9a" stroke-width="0.95"><rect x="4.6" y="7.4" width="8.2" height="2.4" rx="1.2" transform="rotate(41 8.7 8.6)"/><rect x="13.6" y="14.5" width="6.8" height="4.2" rx="0.9" transform="rotate(45 17 16.6)" fill="url(#ht)"/><path d="M9.4 15.4L13.6 11C13 9.5 13.2 6.6 15.05 5.2L17.65 5.35L16.2 7.5L16.2 8.7L18.8 9.55L20.55 7.2C21 8.5 20.7 10.1 20 11C19.2 12 17.8 12.4 16.8 12.4L11.6 17.5"/><circle cx="8.2" cy="17.2" r="2.6" fill="url(#ht)"/></g></svg></span><span class="tr"><svg class="ic3" width="20" height="25" viewBox="0 0 20 25"><g fill="none" stroke="#a2a2a2" stroke-width="1"><rect x="6" y="3" width="3.6" height="1.1" fill="#b0b0b0" stroke="none"/><rect x="0.5" y="4.5" width="15" height="2.2"/><path d="M1.2 6.8v15.6h13.6v-15.6"/><path d="M3.5 7v15M7.9 7v15M12.3 7v15" stroke="#b4b4b4"/></g></svg></span></td></tr>
<tr><td class="c1">229</td><td class="c2">Cable Entry System</td><td class="c3">1827880000</td><td class="c4">Cable Entry Module HDC KT 11 b(11~12mm)</td><td class="c5"><span class="ed"><svg class="ic2" width="60" height="25" viewBox="0 0 60 25"><g fill="none" stroke="#9a9a9a" stroke-width="0.95"><rect x="4.6" y="7.4" width="8.2" height="2.4" rx="1.2" transform="rotate(41 8.7 8.6)"/><rect x="13.6" y="14.5" width="6.8" height="4.2" rx="0.9" transform="rotate(45 17 16.6)" fill="url(#ht)"/><path d="M9.4 15.4L13.6 11C13 9.5 13.2 6.6 15.05 5.2L17.65 5.35L16.2 7.5L16.2 8.7L18.8 9.55L20.55 7.2C21 8.5 20.7 10.1 20 11C19.2 12 17.8 12.4 16.8 12.4L11.6 17.5"/><circle cx="8.2" cy="17.2" r="2.6" fill="url(#ht)"/></g></svg></span><span class="tr"><svg class="ic3" width="20" height="25" viewBox="0 0 20 25"><g fill="none" stroke="#a2a2a2" stroke-width="1"><rect x="6" y="3" width="3.6" height="1.1" fill="#b0b0b0" stroke="none"/><rect x="0.5" y="4.5" width="15" height="2.2"/><path d="M1.2 6.8v15.6h13.6v-15.6"/><path d="M3.5 7v15M7.9 7v15M12.3 7v15" stroke="#b4b4b4"/></g></svg></span></td></tr>
<tr><td class="c1">228</td><td class="c2">Cable Entry System</td><td class="c3">1827870000</td><td class="c4">Cable Entry Module HDC KT 10 b(10~11mm)</td><td class="c5"><span class="ed"><svg class="ic2" width="60" height="25" viewBox="0 0 60 25"><g fill="none" stroke="#9a9a9a" stroke-width="0.95"><rect x="4.6" y="7.4" width="8.2" height="2.4" rx="1.2" transform="rotate(41 8.7 8.6)"/><rect x="13.6" y="14.5" width="6.8" height="4.2" rx="0.9" transform="rotate(45 17 16.6)" fill="url(#ht)"/><path d="M9.4 15.4L13.6 11C13 9.5 13.2 6.6 15.05 5.2L17.65 5.35L16.2 7.5L16.2 8.7L18.8 9.55L20.55 7.2C21 8.5 20.7 10.1 20 11C19.2 12 17.8 12.4 16.8 12.4L11.6 17.5"/><circle cx="8.2" cy="17.2" r="2.6" fill="url(#ht)"/></g></svg></span><span class="tr"><svg class="ic3" width="20" height="25" viewBox="0 0 20 25"><g fill="none" stroke="#a2a2a2" stroke-width="1"><rect x="6" y="3" width="3.6" height="1.1" fill="#b0b0b0" stroke="none"/><rect x="0.5" y="4.5" width="15" height="2.2"/><path d="M1.2 6.8v15.6h13.6v-15.6"/><path d="M3.5 7v15M7.9 7v15M12.3 7v15" stroke="#b4b4b4"/></g></svg></span></td></tr>
<tr><td class="c1">227</td><td class="c2">Cable Entry System</td><td class="c3">1827860000</td><td class="c4">Cable Entry Module HDC KT 9 b(9~10mm)</td><td class="c5"><span class="ed"><svg class="ic2" width="60" height="25" viewBox="0 0 60 25"><g fill="none" stroke="#9a9a9a" stroke-width="0.95"><rect x="4.6" y="7.4" width="8.2" height="2.4" rx="1.2" transform="rotate(41 8.7 8.6)"/><rect x="13.6" y="14.5" width="6.8" height="4.2" rx="0.9" transform="rotate(45 17 16.6)" fill="url(#ht)"/><path d="M9.4 15.4L13.6 11C13 9.5 13.2 6.6 15.05 5.2L17.65 5.35L16.2 7.5L16.2 8.7L18.8 9.55L20.55 7.2C21 8.5 20.7 10.1 20 11C19.2 12 17.8 12.4 16.8 12.4L11.6 17.5"/><circle cx="8.2" cy="17.2" r="2.6" fill="url(#ht)"/></g></svg></span><span class="tr"><svg class="ic3" width="20" height="25" viewBox="0 0 20 25"><g fill="none" stroke="#a2a2a2" stroke-width="1"><rect x="6" y="3" width="3.6" height="1.1" fill="#b0b0b0" stroke="none"/><rect x="0.5" y="4.5" width="15" height="2.2"/><path d="M1.2 6.8v15.6h13.6v-15.6"/><path d="M3.5 7v15M7.9 7v15M12.3 7v15" stroke="#b4b4b4"/></g></svg></span></td></tr>
<tr><td class="c1">226</td><td class="c2">Cable Entry System</td><td class="c3">1827850000</td><td class="c4">Cable Entry Module HDC KT 8 b(8~9mm)</td><td class="c5"><span class="ed"><svg class="ic2" width="60" height="25" viewBox="0 0 60 25"><g fill="none" stroke="#9a9a9a" stroke-width="0.95"><rect x="4.6" y="7.4" width="8.2" height="2.4" rx="1.2" transform="rotate(41 8.7 8.6)"/><rect x="13.6" y="14.5" width="6.8" height="4.2" rx="0.9" transform="rotate(45 17 16.6)" fill="url(#ht)"/><path d="M9.4 15.4L13.6 11C13 9.5 13.2 6.6 15.05 5.2L17.65 5.35L16.2 7.5L16.2 8.7L18.8 9.55L20.55 7.2C21 8.5 20.7 10.1 20 11C19.2 12 17.8 12.4 16.8 12.4L11.6 17.5"/><circle cx="8.2" cy="17.2" r="2.6" fill="url(#ht)"/></g></svg></span><span class="tr"><svg class="ic3" width="20" height="25" viewBox="0 0 20 25"><g fill="none" stroke="#a2a2a2" stroke-width="1"><rect x="6" y="3" width="3.6" height="1.1" fill="#b0b0b0" stroke="none"/><rect x="0.5" y="4.5" width="15" height="2.2"/><path d="M1.2 6.8v15.6h13.6v-15.6"/><path d="M3.5 7v15M7.9 7v15M12.3 7v15" stroke="#b4b4b4"/></g></svg></span></td></tr>
<tr><td class="c1">225</td><td class="c2">Cable Entry System</td><td class="c3">1827840000</td><td class="c4">Cable Entry Module HDC KT 7 b(7~8mm)</td><td class="c5"><span class="ed"><svg class="ic2" width="60" height="25" viewBox="0 0 60 25"><g fill="none" stroke="#9a9a9a" stroke-width="0.95"><rect x="4.6" y="7.4" width="8.2" height="2.4" rx="1.2" transform="rotate(41 8.7 8.6)"/><rect x="13.6" y="14.5" width="6.8" height="4.2" rx="0.9" transform="rotate(45 17 16.6)" fill="url(#ht)"/><path d="M9.4 15.4L13.6 11C13 9.5 13.2 6.6 15.05 5.2L17.65 5.35L16.2 7.5L16.2 8.7L18.8 9.55L20.55 7.2C21 8.5 20.7 10.1 20 11C19.2 12 17.8 12.4 16.8 12.4L11.6 17.5"/><circle cx="8.2" cy="17.2" r="2.6" fill="url(#ht)"/></g></svg></span><span class="tr"><svg class="ic3" width="20" height="25" viewBox="0 0 20 25"><g fill="none" stroke="#a2a2a2" stroke-width="1"><rect x="6" y="3" width="3.6" height="1.1" fill="#b0b0b0" stroke="none"/><rect x="0.5" y="4.5" width="15" height="2.2"/><path d="M1.2 6.8v15.6h13.6v-15.6"/><path d="M3.5 7v15M7.9 7v15M12.3 7v15" stroke="#b4b4b4"/></g></svg></span></td></tr>
<tr><td class="c1">224</td><td class="c2">Cable Entry System</td><td class="c3">1827830000</td><td class="c4">Cable Entry Module HDC KT 6 b(6~7mm)</td><td class="c5"><span class="ed"><svg class="ic2" width="60" height="25" viewBox="0 0 60 25"><g fill="none" stroke="#9a9a9a" stroke-width="0.95"><rect x="4.6" y="7.4" width="8.2" height="2.4" rx="1.2" transform="rotate(41 8.7 8.6)"/><rect x="13.6" y="14.5" width="6.8" height="4.2" rx="0.9" transform="rotate(45 17 16.6)" fill="url(#ht)"/><path d="M9.4 15.4L13.6 11C13 9.5 13.2 6.6 15.05 5.2L17.65 5.35L16.2 7.5L16.2 8.7L18.8 9.55L20.55 7.2C21 8.5 20.7 10.1 20 11C19.2 12 17.8 12.4 16.8 12.4L11.6 17.5"/><circle cx="8.2" cy="17.2" r="2.6" fill="url(#ht)"/></g></svg></span><span class="tr"><svg class="ic3" width="20" height="25" viewBox="0 0 20 25"><g fill="none" stroke="#a2a2a2" stroke-width="1"><rect x="6" y="3" width="3.6" height="1.1" fill="#b0b0b0" stroke="none"/><rect x="0.5" y="4.5" width="15" height="2.2"/><path d="M1.2 6.8v15.6h13.6v-15.6"/><path d="M3.5 7v15M7.9 7v15M12.3 7v15" stroke="#b4b4b4"/></g></svg></span></td></tr>
<tr><td class="c1">223</td><td class="c2">Cable Entry System</td><td class="c3">1827810000</td><td class="c4">Cable Entry Module HDC KT 5 b(5~6mm)</td><td class="c5"><span class="ed"><svg class="ic2" width="60" height="25" viewBox="0 0 60 25"><g fill="none" stroke="#9a9a9a" stroke-width="0.95"><rect x="4.6" y="7.4" width="8.2" height="2.4" rx="1.2" transform="rotate(41 8.7 8.6)"/><rect x="13.6" y="14.5" width="6.8" height="4.2" rx="0.9" transform="rotate(45 17 16.6)" fill="url(#ht)"/><path d="M9.4 15.4L13.6 11C13 9.5 13.2 6.6 15.05 5.2L17.65 5.35L16.2 7.5L16.2 8.7L18.8 9.55L20.55 7.2C21 8.5 20.7 10.1 20 11C19.2 12 17.8 12.4 16.8 12.4L11.6 17.5"/><circle cx="8.2" cy="17.2" r="2.6" fill="url(#ht)"/></g></svg></span><span class="tr"><svg class="ic3" width="20" height="25" viewBox="0 0 20 25"><g fill="none" stroke="#a2a2a2" stroke-width="1"><rect x="6" y="3" width="3.6" height="1.1" fill="#b0b0b0" stroke="none"/><rect x="0.5" y="4.5" width="15" height="2.2"/><path d="M1.2 6.8v15.6h13.6v-15.6"/><path d="M3.5 7v15M7.9 7v15M12.3 7v15" stroke="#b4b4b4"/></g></svg></span></td></tr>
<tr><td class="c1">222</td><td class="c2">Cable Entry System</td><td class="c3">1827800000</td><td class="c4">Cable Entry Module HDC KT 4 b(4~5mm)</td><td class="c5"><span class="ed"><svg class="ic2" width="60" height="25" viewBox="0 0 60 25"><g fill="none" stroke="#9a9a9a" stroke-width="0.95"><rect x="4.6" y="7.4" width="8.2" height="2.4" rx="1.2" transform="rotate(41 8.7 8.6)"/><rect x="13.6" y="14.5" width="6.8" height="4.2" rx="0.9" transform="rotate(45 17 16.6)" fill="url(#ht)"/><path d="M9.4 15.4L13.6 11C13 9.5 13.2 6.6 15.05 5.2L17.65 5.35L16.2 7.5L16.2 8.7L18.8 9.55L20.55 7.2C21 8.5 20.7 10.1 20 11C19.2 12 17.8 12.4 16.8 12.4L11.6 17.5"/><circle cx="8.2" cy="17.2" r="2.6" fill="url(#ht)"/></g></svg></span><span class="tr"><svg class="ic3" width="20" height="25" viewBox="0 0 20 25"><g fill="none" stroke="#a2a2a2" stroke-width="1"><rect x="6" y="3" width="3.6" height="1.1" fill="#b0b0b0" stroke="none"/><rect x="0.5" y="4.5" width="15" height="2.2"/><path d="M1.2 6.8v15.6h13.6v-15.6"/><path d="M3.5 7v15M7.9 7v15M12.3 7v15" stroke="#b4b4b4"/></g></svg></span></td></tr>
<tr><td class="c1">221</td><td class="c2">Cable Entry System</td><td class="c3">1827790000</td><td class="c4">Cable Entry Module HDC KT 3 b(3~4mm)</td><td class="c5"><span class="ed"><svg class="ic2" width="60" height="25" viewBox="0 0 60 25"><g fill="none" stroke="#9a9a9a" stroke-width="0.95"><rect x="4.6" y="7.4" width="8.2" height="2.4" rx="1.2" transform="rotate(41 8.7 8.6)"/><rect x="13.6" y="14.5" width="6.8" height="4.2" rx="0.9" transform="rotate(45 17 16.6)" fill="url(#ht)"/><path d="M9.4 15.4L13.6 11C13 9.5 13.2 6.6 15.05 5.2L17.65 5.35L16.2 7.5L16.2 8.7L18.8 9.55L20.55 7.2C21 8.5 20.7 10.1 20 11C19.2 12 17.8 12.4 16.8 12.4L11.6 17.5"/><circle cx="8.2" cy="17.2" r="2.6" fill="url(#ht)"/></g></svg></span><span class="tr"><svg class="ic3" width="20" height="25" viewBox="0 0 20 25"><g fill="none" stroke="#a2a2a2" stroke-width="1"><rect x="6" y="3" width="3.6" height="1.1" fill="#b0b0b0" stroke="none"/><rect x="0.5" y="4.5" width="15" height="2.2"/><path d="M1.2 6.8v15.6h13.6v-15.6"/><path d="M3.5 7v15M7.9 7v15M12.3 7v15" stroke="#b4b4b4"/></g></svg></span></td></tr>
<tr><td class="c1">220</td><td class="c2">Cable Entry System</td><td class="c3">1827780000</td><td class="c4">Cable Entry Module HDC KT 2 b(2~3mm)</td><td class="c5"><span class="ed"><svg class="ic2" width="60" height="25" viewBox="0 0 60 25"><g fill="none" stroke="#9a9a9a" stroke-width="0.95"><rect x="4.6" y="7.4" width="8.2" height="2.4" rx="1.2" transform="rotate(41 8.7 8.6)"/><rect x="13.6" y="14.5" width="6.8" height="4.2" rx="0.9" transform="rotate(45 17 16.6)" fill="url(#ht)"/><path d="M9.4 15.4L13.6 11C13 9.5 13.2 6.6 15.05 5.2L17.65 5.35L16.2 7.5L16.2 8.7L18.8 9.55L20.55 7.2C21 8.5 20.7 10.1 20 11C19.2 12 17.8 12.4 16.8 12.4L11.6 17.5"/><circle cx="8.2" cy="17.2" r="2.6" fill="url(#ht)"/></g></svg></span><span class="tr"><svg class="ic3" width="20" height="25" viewBox="0 0 20 25"><g fill="none" stroke="#a2a2a2" stroke-width="1"><rect x="6" y="3" width="3.6" height="1.1" fill="#b0b0b0" stroke="none"/><rect x="0.5" y="4.5" width="15" height="2.2"/><path d="M1.2 6.8v15.6h13.6v-15.6"/><path d="M3.5 7v15M7.9 7v15M12.3 7v15" stroke="#b4b4b4"/></g></svg></span></td></tr>
</table>
<div id="srow"><div class="lab">SEARCH</div><div class="inp"></div><div class="btn">Search</div><div class="tot">Total : 248</div></div>
</div></body></html>
